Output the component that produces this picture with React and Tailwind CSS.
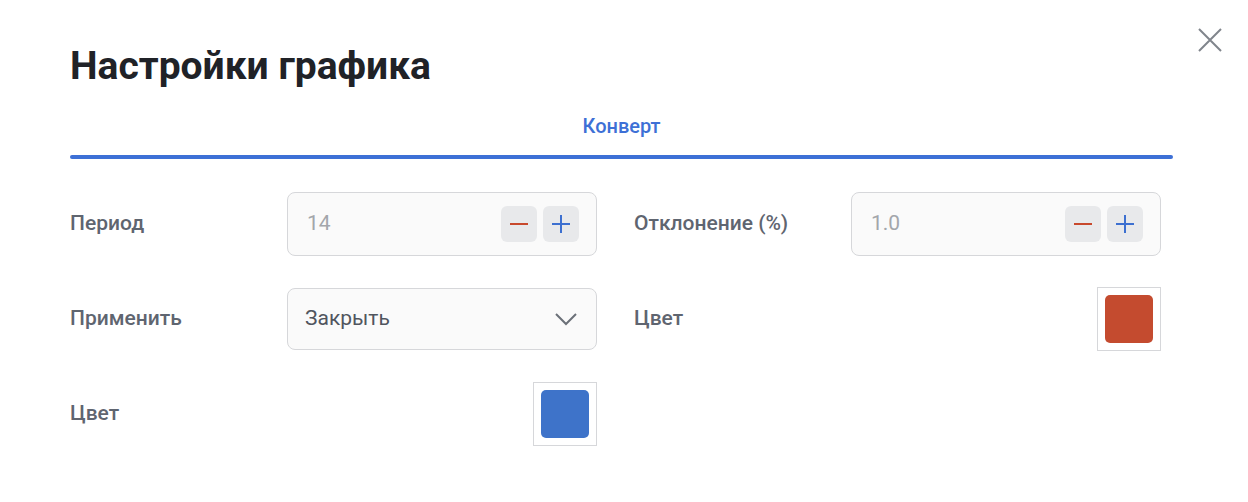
import React from "react";

function Stepper({ value }) {
  return (
    <div className="flex h-[64px] w-[310px] items-center justify-between rounded-[8px] border border-[#d6d7da] bg-[#fafafa] pl-[19px] pr-[17px]">
      <span className="text-[21px] text-[#a3a6ab]">{value}</span>
      <div className="flex gap-[6px]">
        <button className="flex h-[36px] w-[36px] items-center justify-center rounded-[6px] bg-[#e8e9eb]">
          <svg width="20" height="20" viewBox="0 0 20 20"><path d="M1 10h18" stroke="#c8492d" strokeWidth="2" /></svg>
        </button>
        <button className="flex h-[36px] w-[36px] items-center justify-center rounded-[6px] bg-[#e8e9eb]">
          <svg width="20" height="20" viewBox="0 0 20 20"><path d="M1 10h18M10 1v18" stroke="#3d70d0" strokeWidth="2" /></svg>
        </button>
      </div>
    </div>
  );
}

function Swatch({ color }) {
  return (
    <div className="flex h-[64px] w-[64px] items-center justify-center border border-[#d6d7da] bg-white">
      <div className="h-[48px] w-[48px] rounded-[5px]" style={{ backgroundColor: color }} />
    </div>
  );
}

function Label({ children }) {
  return <div className="w-[217px] shrink-0 text-[21px] font-medium text-[#5f6570]">{children}</div>;
}

export default function App() {
  return (
    <div className="relative h-[502px] w-[1248px] bg-white" style={{ fontFamily: "Roboto, 'Noto Sans', sans-serif" }}>
      <button className="absolute right-[25px] top-[27px]">
        <svg width="26" height="26" viewBox="0 0 26 26"><path d="M2 2L24 24M24 2L2 24" stroke="#80858c" strokeWidth="2" /></svg>
      </button>
      <div className="px-[70px] pt-[40px]">
        <h1 className="text-[39px] font-bold leading-[52px] text-[#202227]">Настройки графика</h1>
        <div className="w-[1103px]">
          <div className="pt-[19px] pb-[14px] text-center text-[20px] font-medium leading-[30px] text-[#3d70d6]">Конверт</div>
          <div className="h-[4px] rounded-full bg-[#3d70d6]" />
        </div>
        <div className="mt-[33px] grid w-[1091px] grid-cols-2 gap-x-[37px] gap-y-[31px]">
          <div className="flex items-center">
            <Label>Период</Label>
            <Stepper value="14" />
          </div>
          <div className="flex items-center">
            <Label>Отклонение (%)</Label>
            <Stepper value="1.0" />
          </div>
          <div className="flex items-center">
            <Label>Применить</Label>
            <div className="flex h-[62px] w-[310px] items-center justify-between rounded-[8px] border border-[#d6d7da] bg-[#fafafa] pl-[17px] pr-[18px]">
              <span className="text-[21px] text-[#50555e]">Закрыть</span>
              <svg width="24" height="14" viewBox="0 0 24 14"><path d="M2 2l10 10 10-10" fill="none" stroke="#6b7078" strokeWidth="2" /></svg>
            </div>
          </div>
          <div className="flex items-center justify-between">
            <Label>Цвет</Label>
            <Swatch color="#c44b2f" />
          </div>
          <div className="flex items-center justify-between">
            <Label>Цвет</Label>
            <Swatch color="#3e73c9" />
          </div>
        </div>
      </div>
    </div>
  );
}
